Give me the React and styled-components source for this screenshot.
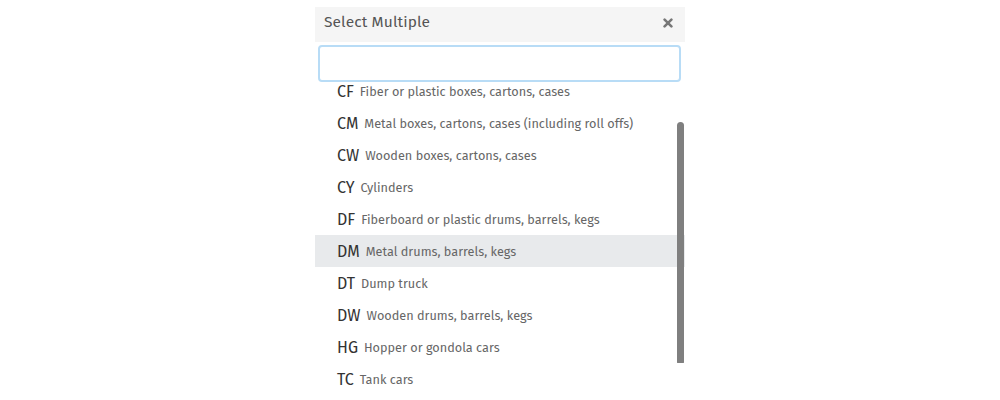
import React from "react";
import styled, { createGlobalStyle } from "styled-components";

const Global = createGlobalStyle`
  html, body { margin: 0; padding: 0; background: #fff; }
  body { font-family: "Fira Sans", "Noto Sans", "Open Sans", sans-serif; }
`;

const Page = styled.div`
  display: flex;
  justify-content: center;
  padding-top: 7px;
  height: 400px;
  box-sizing: border-box;
  overflow: hidden;
`;

const Panel = styled.div`
  width: 370px;
  display: flex;
  flex-direction: column;
  background: #fff;
`;

const Header = styled.div`
  height: 35px;
  background: #f5f5f5;
  display: flex;
  align-items: center;
  justify-content: space-between;
  padding: 0 12px 5px 9px;
  box-sizing: border-box;
`;

const Title = styled.span`
  font-size: 15.5px;
  color: #555;
  letter-spacing: 0.1px;
`;

const Close = styled.span`
  display: flex;
  align-items: center;
  padding-top: 2px;
`;

const SearchWrap = styled.div`
  padding: 3px 4px 2px 3px;
`;

const Search = styled.input`
  display: block;
  width: 100%;
  height: 37px;
  box-sizing: border-box;
  border: 2px solid #b8dcf6;
  border-radius: 4px;
  outline: none;
  font-size: 15px;
  padding: 0 10px;
  font-family: inherit;
`;

const Viewport = styled.div`
  position: relative;
  flex: 1;
  overflow: hidden;
`;

const List = styled.ul`
  list-style: none;
  margin: -9px 0 0;
  padding: 0;
`;

const Row = styled.li`
  height: 32px;
  display: flex;
  align-items: center;
  padding-left: 22px;
  background: ${(p) => (p.$active ? "#e8eaec" : "transparent")};
`;

const Code = styled.span`
  font-size: 16px;
  font-weight: 400;
  color: #333;
  margin-right: 6px;
`;

const Desc = styled.span`
  font-size: 12.7px;
  color: #666;
`;

const Thumb = styled.div`
  position: absolute;
  right: 1px;
  top: 38px;
  width: 7px;
  height: 241px;
  background: #7f7f7f;
  border-radius: 4px 4px 1px 1px;
`;

const items = [
  ["CF", "Fiber or plastic boxes, cartons, cases"],
  ["CM", "Metal boxes, cartons, cases (including roll offs)"],
  ["CW", "Wooden boxes, cartons, cases"],
  ["CY", "Cylinders"],
  ["DF", "Fiberboard or plastic drums, barrels, kegs"],
  ["DM", "Metal drums, barrels, kegs"],
  ["DT", "Dump truck"],
  ["DW", "Wooden drums, barrels, kegs"],
  ["HG", "Hopper or gondola cars"],
  ["TC", "Tank cars"],
];

export default function App() {
  return (
    <>
      <Global />
      <Page>
        <Panel>
          <Header>
            <Title>Select Multiple</Title>
            <Close>
              <svg width="10" height="10" viewBox="0 0 10 10">
                <path d="M1.6 1.6 L8.4 8.4 M8.4 1.6 L1.6 8.4" stroke="#777" strokeWidth="2.6" strokeLinecap="round" />
              </svg>
            </Close>
          </Header>
          <SearchWrap>
            <Search />
          </SearchWrap>
          <Viewport>
            <List>
              {items.map(([c, d]) => (
                <Row key={c} $active={c === "DM"}>
                  <Code>{c}</Code>
                  <Desc>{d}</Desc>
                </Row>
              ))}
            </List>
            <Thumb />
          </Viewport>
        </Panel>
      </Page>
    </>
  );
}
